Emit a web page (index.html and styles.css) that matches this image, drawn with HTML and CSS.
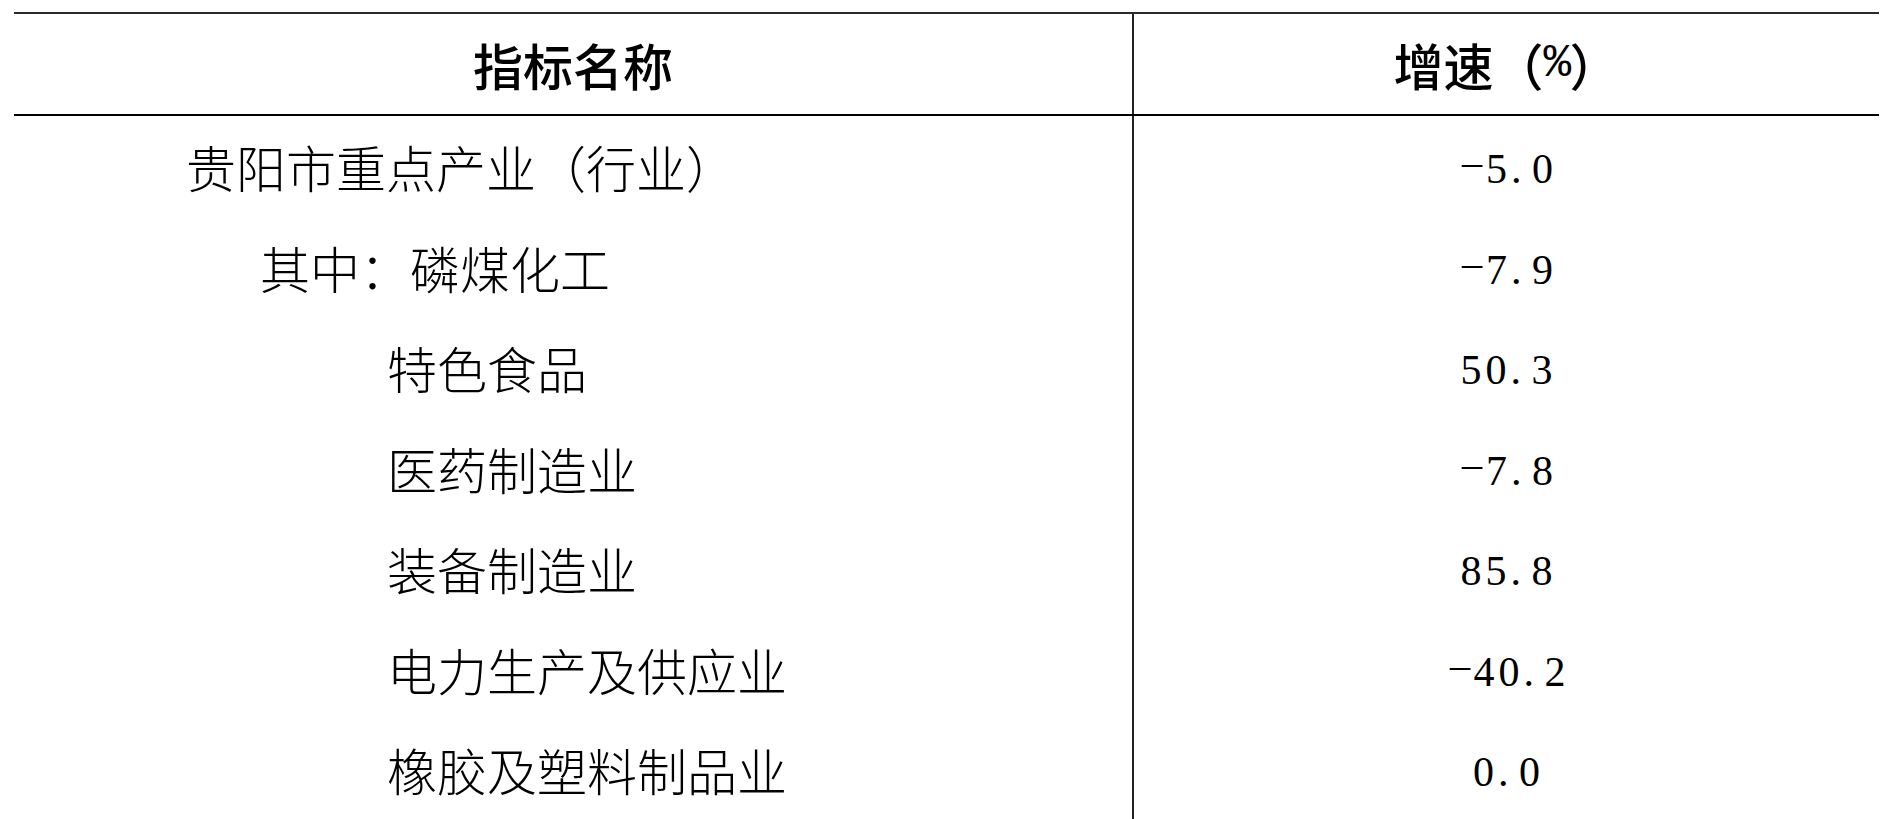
FILE: index.html
```html
<!DOCTYPE html>
<html lang="zh-CN">
<head>
<meta charset="utf-8">
<title>贵阳市重点产业增速</title>
<link rel="stylesheet" href="styles.css">
</head>
<body>
<div class="table">
  <div class="row head">
    <div class="c1">指标名称</div>
    <div class="c2">增速（<span class="pct">%</span>）</div>
  </div>
  <div class="row">
    <div class="c1 l1">贵阳市重点产业（行业）</div>
    <div class="c2 num"><span class="sg">-</span>5<span class="pt">.</span>0</div>
  </div>
  <div class="row">
    <div class="c1 l2">其中：磷煤化工</div>
    <div class="c2 num"><span class="sg">-</span>7<span class="pt">.</span>9</div>
  </div>
  <div class="row">
    <div class="c1 l3">特色食品</div>
    <div class="c2 num">50<span class="pt">.</span>3</div>
  </div>
  <div class="row">
    <div class="c1 l3">医药制造业</div>
    <div class="c2 num"><span class="sg">-</span>7<span class="pt">.</span>8</div>
  </div>
  <div class="row">
    <div class="c1 l3">装备制造业</div>
    <div class="c2 num">85<span class="pt">.</span>8</div>
  </div>
  <div class="row">
    <div class="c1 l3">电力生产及供应业</div>
    <div class="c2 num"><span class="sg">-</span>40<span class="pt">.</span>2</div>
  </div>
  <div class="row">
    <div class="c1 l3">橡胶及塑料制品业</div>
    <div class="c2 num">0<span class="pt">.</span>0</div>
  </div>
</div>
</body>
</html>
```
FILE: styles.css
```css
*, *::before, *::after {
  box-sizing: border-box;
}
html, body {
  margin: 0;
  padding: 0;
  background: #ffffff;
  overflow: hidden;
}
body {
  padding: 12px 0 0 14px;
  color: #000;
  font-family: "Noto Sans CJK SC", "Noto Sans", sans-serif;
}
.table {
  width: 1865px;
  border-top: 2px solid #2a2a2a;
}
.row {
  display: flex;
  height: 100.5px;
}
.row.head {
  height: 102px;
  border-bottom: 2px solid #000;
}
.c1 {
  flex: none;
  width: 1118px;
  display: flex;
  align-items: center;
  font-size: 50px;
  font-weight: 300;
  line-height: 1;
  white-space: nowrap;
}
.c2 {
  flex: none;
  width: 747px;
  display: flex;
  align-items: center;
  justify-content: center;
  border-left: 2px solid #222;
  line-height: 1;
  white-space: nowrap;
}
.head .c1,
.head .c2 {
  justify-content: center;
  font-size: 50px;
  font-weight: 500;
}
.pct {
  font-family: "Liberation Mono", monospace;
  font-size: 46px;
  font-weight: 400;
  display: inline-block;
  width: 26px;
  text-align: center;
}
.l1 { padding-left: 172px; }
.l2 { padding-left: 246px; }
.l3 { padding-left: 373px; }
.num {
  font-family: "Liberation Serif", serif;
  font-size: 42px;
  letter-spacing: 4px;
  padding-top: 6px;
  padding-left: 4px;
}
.pt {
  display: inline-block;
  width: 21px;
}
.sg {
  display: inline-block;
  width: 24px;
  letter-spacing: 0;
  margin-right: 2px;
  text-align: center;
  transform: translateY(-5px) scale(1.9, 0.6);
}
```
